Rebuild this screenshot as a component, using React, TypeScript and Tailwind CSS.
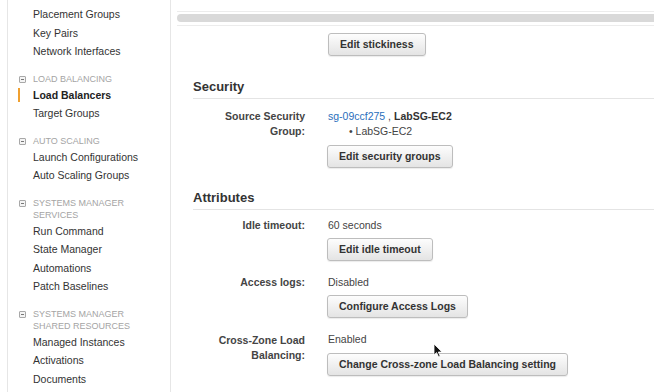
import React from 'react';

type NavGroup = {
  title: string[];
  items: string[];
};

const topItems = ['Placement Groups', 'Key Pairs', 'Network Interfaces'];

const groups: NavGroup[] = [
  { title: ['LOAD BALANCING'], items: ['Load Balancers', 'Target Groups'] },
  { title: ['AUTO SCALING'], items: ['Launch Configurations', 'Auto Scaling Groups'] },
  {
    title: ['SYSTEMS MANAGER', 'SERVICES'],
    items: ['Run Command', 'State Manager', 'Automations', 'Patch Baselines'],
  },
  {
    title: ['SYSTEMS MANAGER', 'SHARED RESOURCES'],
    items: ['Managed Instances', 'Activations', 'Documents'],
  },
];

const MinusBox = () => (
  <span className="absolute left-[-14px] top-[3px] flex h-[7px] w-[7px] items-center justify-center rounded-[1px] border border-[#a8a8a8] bg-[#f4f4f4]">
    <span className="h-px w-[3px] bg-[#777]" />
  </span>
);

const NavItem = ({ label }: { label: string }) => {
  const active = label === 'Load Balancers';
  return (
    <div className="relative leading-[18.5px]">
      {active && <span className="absolute left-[-15px] top-[2px] h-[14px] w-[2px] bg-[#f0a030]" />}
      <span className={active ? 'font-bold text-[#222]' : 'text-[#333]'}>{label}</span>
    </div>
  );
};

const Sidebar = () => (
  <aside className="ml-[7px] w-[164px] shrink-0 border-x border-[#e6e6e6] pl-[25px] pt-[5px] text-[10.5px]">
    {topItems.map((item) => (
      <NavItem key={item} label={item} />
    ))}
    {groups.map((group) => (
      <div key={group.title.join(' ')} className="mt-[12px]">
        <div className="relative pb-px text-[9px] leading-[12px] text-[#a4a4a4]">
          <MinusBox />
          {group.title.map((line) => (
            <div key={line}>{line}</div>
          ))}
        </div>
        {group.items.map((item) => (
          <NavItem key={item} label={item} />
        ))}
      </div>
    ))}
  </aside>
);

const Button = ({ children, className = '' }: { children: React.ReactNode; className?: string }) => (
  <button
    className={`flex h-[23px] items-center rounded-[3px] border border-[#bdbdbd] bg-linear-to-b from-[#fdfdfd] to-[#e4e4e4] px-[11px] text-[10.5px] font-bold text-[#333] shadow-[0_1px_1px_rgba(0,0,0,0.08)] ${className}`}
  >
    {children}
  </button>
);

const SectionTitle = ({ title, className = '' }: { title: string; className?: string }) => (
  <h2 className={`border-b border-[#e4e4e4] pb-[3px] text-[13px] font-bold leading-[16px] text-[#333] ${className}`}>
    {title}
  </h2>
);

const Row = ({
  label,
  children,
  className = '',
}: {
  label: React.ReactNode;
  children: React.ReactNode;
  className?: string;
}) => (
  <div className={`grid grid-cols-[112px_1fr] gap-x-[23px] text-[10.5px] leading-[15px] ${className}`}>
    <div className="text-right font-bold text-[#444]">{label}</div>
    <div className="text-[#444]">{children}</div>
  </div>
);

export default function App() {
  return (
    <div className="relative flex h-[392px] w-[654px] overflow-hidden bg-white font-['Liberation_Sans',Arial,sans-serif]">
      <Sidebar />

      <main className="min-w-0 flex-1">
        {/* Scroll track */}
        <div className="ml-[6px] mt-[11px] h-[15px] border-y border-[#ececec] pt-[2px]">
          <div className="h-[8px] rounded-l-full bg-[#d9d9d9]" />
        </div>

        <div className="pl-[22px]">
          <div className="ml-[135px] mt-[7px]">
            <Button>Edit stickiness</Button>
          </div>

          <SectionTitle title="Security" className="mt-[23px]" />
          <Row
            className="mt-[10px]"
            label={
              <>
                Source Security
                <br />
                Group:
              </>
            }
          >
            <div>
              <span className="text-[#2a6ebb]">sg-09ccf275</span> , <span className="font-bold text-[#333]">LabSG-EC2</span>
            </div>
            <div className="pl-[21px] leading-[14px]">• LabSG-EC2</div>
            <Button className="mt-[7px] -ml-px">Edit security groups</Button>
          </Row>

          <SectionTitle title="Attributes" className="mt-[22px]" />
          <Row className="mt-[8px]" label="Idle timeout:">
            <div>60 seconds</div>
            <Button className="mt-[5px] -ml-px">Edit idle timeout</Button>
          </Row>

          <Row className="mt-[14px]" label="Access logs:">
            <div>Disabled</div>
            <Button className="mt-[5px] -ml-px">Configure Access Logs</Button>
          </Row>

          <Row
            className="mt-[15px]"
            label={
              <>
                Cross-Zone Load
                <br />
                Balancing:
              </>
            }
          >
            <div className="-mt-px">Enabled</div>
            <Button className="mt-[6px] -ml-px">Change Cross-zone Load Balancing setting</Button>
          </Row>
        </div>
      </main>

      {/* Mouse pointer */}
      <svg className="absolute left-[433px] top-[343px]" width="10" height="15" viewBox="0 0 10 15">
        <path d="M1 1 L1 12 L3.6 9.6 L5.6 14 L7.2 13.3 L5.3 9 L9 9 Z" fill="#111" stroke="#fff" strokeWidth="0.8" />
      </svg>
    </div>
  );
}
